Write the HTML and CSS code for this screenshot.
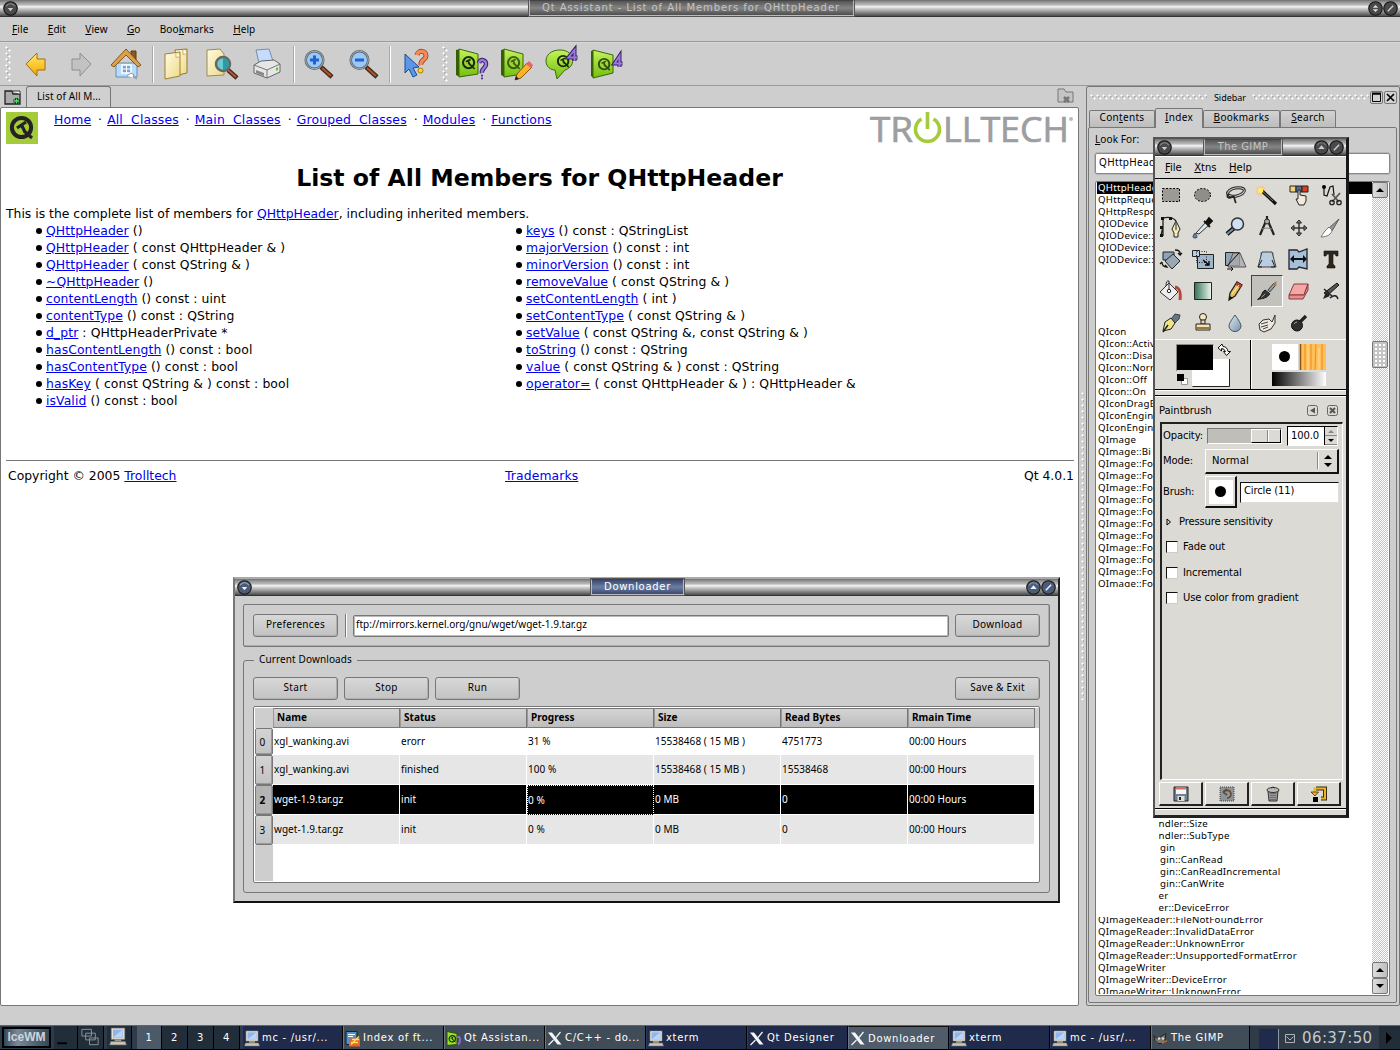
FILE: index.html
```html
<!DOCTYPE html>
<html lang="en">
<head>
<meta charset="utf-8">
<title>Qt Assistant</title>
<link rel="stylesheet" href="styles.css">
</head>
<body>
<svg width="0" height="0" class="defs">
  <defs>
    <linearGradient id="gold" x1="0" y1="0" x2="0" y2="1"><stop offset="0" stop-color="#ffe96a"/><stop offset="1" stop-color="#f7a800"/></linearGradient>
    <linearGradient id="paper" x1="0" y1="0" x2="1" y2="1"><stop offset="0" stop-color="#fffbe0"/><stop offset="1" stop-color="#eed98a"/></linearGradient>
    <linearGradient id="lime" x1="0" y1="0" x2="0" y2="1"><stop offset="0" stop-color="#c4f25a"/><stop offset="1" stop-color="#72bf10"/></linearGradient>
    <linearGradient id="steel" x1="0" y1="0" x2="1" y2="1"><stop offset="0" stop-color="#e4edf5"/><stop offset="1" stop-color="#7890a8"/></linearGradient>
    <linearGradient id="green" x1="0" y1="0" x2="1" y2="0"><stop offset="0" stop-color="#2f7553"/><stop offset="1" stop-color="#f2f7f2"/></linearGradient>
    <symbol id="roll" viewBox="0 0 14 14"><circle cx="7" cy="7" r="6.3" fill="#4a4a4a" stroke="#111"/><path d="M3 5a4.5 4.5 0 0 1 8 0" stroke="#8a8a8a" fill="none"/><path d="M4.500 6.500h5l-2.500 3z" fill="#ccc"/></symbol>
    <symbol id="max" viewBox="0 0 14 14"><circle cx="7" cy="7" r="6.300" fill="#4a4a4a" stroke="#111"/><path d="M3 5a4.500 4.500 0 0 1 8 0" stroke="#777" fill="none"/><path d="M4 8.500h6l-3-3.700z" fill="#ccc"/></symbol>
    <symbol id="restore" viewBox="0 0 14 14"><circle cx="7" cy="7" r="6.300" fill="#4a4a4a" stroke="#111"/><path d="M4.500 6.300h5l-2.500-2.600zM4.500 7.700h5l-2.500 2.600z" fill="#ddd"/></symbol>
    <symbol id="close" viewBox="0 0 14 14"><circle cx="7" cy="7" r="6.300" fill="#4a4a4a" stroke="#111"/><path d="M4.500 9.500l5-5" stroke="#ccc" stroke-width="1.400"/></symbol>
    <symbol id="q" viewBox="0 0 20 20"><circle cx="9.500" cy="9.500" r="7" fill="none" stroke="#1d2a08" stroke-width="2.600"/><path d="M6 8.500l6-3M9 7l2 5.500M9 9.500l8 8" stroke="#1d2a08" stroke-width="2.200"/></symbol>
    <symbol id="term" viewBox="0 0 16 17"><path d="M2 1h12v10H2z" fill="#e5e2d8" stroke="#8c8a80" stroke-width=".6"/><path d="M3.500 2.300h9v7.200h-9z" fill="#8fb5ee"/><path d="M4 9l8-6.500v6.500z" fill="#bcd4fa"/><path d="M5 11h6v2H5z" fill="#9a968a"/><path d="M1.500 13h13l1 3H.5z" fill="#c9c5b8" stroke="#77746a" stroke-width=".6"/></symbol>
    <symbol id="x11" viewBox="0 0 16 14"><path d="M1 1h4l9.500 12h-4z" fill="#f4f6f8"/><path d="M13.500 .5L9 6M6.500 8.500l-5 5" stroke="#f4f6f8" stroke-width="1.200"/></symbol>
  </defs>
</svg>

<div class="desktop">
  <main class="assistant">
    <header class="titlebar main-title">
      <svg class="wb"><use href="#roll"/></svg>
      <span class="fill"></span>
      <span class="caption cap-main"><span class="t-main">Qt Assistant - List of All Members for QHttpHeader</span></span>
      <span class="fill"></span>
      <svg class="wb"><use href="#restore"/></svg><svg class="wb"><use href="#close"/></svg>
    </header>
    <nav class="menubar"><span><u>F</u>ile</span><span><u>E</u>dit</span><span><u>V</u>iew</span><span><u>G</u>o</span><span>Boo<u>k</u>marks</span><span><u>H</u>elp</span></nav>
    <div class="toolbar">
      <i class="grip"></i>
      <svg class="tb" viewBox="0 0 32 32"><path d="M6 16L17 5v6h8v11h-8v6z" fill="url(#gold)" stroke="#a86a08"/></svg>
      <svg class="tb" viewBox="0 0 32 32"><path d="M26 16L15 5v6H7v11h8v6z" fill="#c2c2c2" stroke="#8e8e8e"/></svg>
      <svg class="tb" viewBox="0 0 32 32"><path d="M21 3h5v9h-5z" fill="#8a5a1c" stroke="#5c3a0c"/><path d="M6 15h21v14H6z" fill="#b5dcff" stroke="#6f8ca5"/><path d="M1 17L16 1l15 16-3 2L16 7 4 19z" fill="#dca04c" stroke="#8a5618"/><path d="M12 17h9v8h-9z" fill="#79a5cf" stroke="#fff" stroke-width="1.500"/><path d="M16.500 17v8M12 21h9" stroke="#fff"/><path d="M17 28l4-3 3 2-1 2 4 2" fill="#fff" stroke="#777" stroke-width=".8"/></svg>
      <i class="sep s1"></i>
      <svg class="tb" viewBox="0 0 32 32"><path d="M14 2l12-1v24l-9 2z" fill="url(#paper)" stroke="#927929"/><path d="M4 6l15-2v24L4 31z" fill="url(#paper)" stroke="#a0802a"/><path d="M15 4.500v5l4-1M22 1.500v5l4-1" fill="#fff" stroke="#b89a46" stroke-width=".7"/></svg>
      <svg class="tb" viewBox="0 0 32 32"><path d="M1 2l13-1 4 5v21L1 28z" fill="url(#paper)" stroke="#a08a48"/><path d="M22 22l9 8" stroke="#43281c" stroke-width="4.500"/><path d="M22 22l8 7" stroke="#b5583a" stroke-width="2"/><circle cx="17" cy="16" r="7" fill="#6ccbd0" stroke="#666" stroke-width="2.500"/><path d="M17 10v12a6 6 0 0 0 0-12z" fill="#2f9aa2"/></svg>
      <svg class="tb" viewBox="0 0 32 32"><path d="M5 2l13-1 4 12-14 2z" fill="#c4dcff" stroke="#7a8ca8"/><path d="M3 17l7-4 13-1 6 4v8l-13 6-13-5z" fill="#e6e6e6" stroke="#666"/><path d="M3 17l13 5 13-6M16 22v8" fill="none" stroke="#777"/><path d="M5 22l8 3v3l-8-3z" fill="#888"/><path d="M25 20l2-1v3l-2 1z" fill="#5fc13a"/></svg>
      <i class="sep s2"></i>
      <svg class="tb" viewBox="0 0 32 32"><path d="M19 19l11 10" stroke="#43281c" stroke-width="4.500"/><path d="M20 20l9 8" stroke="#b0542c" stroke-width="2"/><circle cx="12.500" cy="12" r="8.800" fill="#9cc8f4" stroke="#59636c" stroke-width="2.500"/><circle cx="12.500" cy="12" r="8.800" fill="none" stroke="#a5afb8" stroke-width="1"/><path d="M12.500 7.500v9M8 12h9" stroke="#1e62d4" stroke-width="3"/></svg>
      <svg class="tb" viewBox="0 0 32 32"><path d="M19 19l11 10" stroke="#43281c" stroke-width="4.500"/><path d="M20 20l9 8" stroke="#b0542c" stroke-width="2"/><circle cx="12.500" cy="12" r="8.800" fill="#9cc8f4" stroke="#59636c" stroke-width="2.500"/><circle cx="12.500" cy="12" r="8.800" fill="none" stroke="#a5afb8" stroke-width="1"/><path d="M8 12h9" stroke="#1e62d4" stroke-width="3"/></svg>
      <i class="sep s3"></i>
      <svg class="tb" viewBox="0 0 32 32"><path d="M6 6v19l4-4 4 8 4-2-4-7 6-1z" fill="#5b97e8" stroke="#1e4a92"/><path d="M18 7c1-5 9-5 9 1 0 4-6 4-5 9" fill="none" stroke="#a8432a" stroke-width="5"/><path d="M18 7c1-5 9-5 9 1 0 4-6 4-5 9" fill="none" stroke="#f58a58" stroke-width="3.200"/><circle cx="21.500" cy="22.500" r="2.500" fill="#fbd633" stroke="#a57a10"/></svg>
      <i class="grip g2"></i>
      <svg class="tb" viewBox="0 0 32 32"><path d="M1 2l4-1v28l-4-2z" fill="#375f08"/><path d="M4 1l19 5v20L4 29z" fill="url(#lime)" stroke="#3a6508"/><use href="#q" x="6" y="7" width="16" height="16"/><path d="M24 15c1-5 7-3 7 1 0 5-5 4-4 9M26 29h2" fill="none" stroke="#332064" stroke-width="4.500"/><path d="M24 15c1-5 7-3 7 1 0 5-5 4-4 9M26 29h2" fill="none" stroke="#9b78dc" stroke-width="2.500"/></svg>
      <svg class="tb" viewBox="0 0 32 32"><path d="M1 2l4-1v28l-4-2z" fill="#375f08"/><path d="M4 1l19 5v20L4 29z" fill="url(#lime)" stroke="#3a6508"/><g opacity=".7"><use href="#q" x="6" y="7" width="16" height="16"/></g><path d="M15 32l2-6 10-11 5 4-11 11z" fill="#fbb42a" stroke="#8a540a"/><path d="M26 16l3-3 4 4-2 3z" fill="#e9646c"/><path d="M15 32l1-4 3 3z" fill="#222"/></svg>
      <svg class="tb" viewBox="0 0 32 32"><path d="M15 2C6 2 1 7 1 13c0 6 5 9 9 9l2 9 8-9c6-2 9-7 7-12C26 4 20 2 15 2z" fill="url(#lime)" stroke="#3f6a10"/><use href="#q" x="11" y="6" width="15" height="15"/><path d="M29.500 13V2l-6 7.500h9" fill="none" stroke="#332064" stroke-width="4"/><path d="M29.500 13V2l-6 7.500h9" fill="none" stroke="#9b78dc" stroke-width="2"/></svg>
      <svg class="tb" viewBox="0 0 32 32"><path d="M1 3l3-1v28l-3-2z" fill="#375f08"/><path d="M3 2l20 5v18L3 30z" fill="url(#lime)" stroke="#3a6508"/><g opacity=".8"><use href="#q" x="7" y="9" width="15" height="15"/></g><path d="M29.500 19V8l-5 7.500h8" fill="none" stroke="#332064" stroke-width="4"/><path d="M29.500 19V8l-5 7.500h8" fill="none" stroke="#9b78dc" stroke-width="2"/></svg>
    </div>
    <div class="work">
      <section class="browser">
        <div class="tabrow">
          <svg class="newtab" viewBox="0 0 17 15"><path d="M1 14V1h7l1 3h7v10z" fill="#aaa" stroke="#222" stroke-width="1.300"/><path d="M9 1h7v3" fill="#fff" stroke="#333"/><path d="M12.500 8v6M9.500 11h6" stroke="#052c0a" stroke-width="3"/><path d="M12.500 8.500v5M10 11h5" stroke="#51e26a" stroke-width="1.400"/></svg>
          <span class="tab-doc">List of All M...</span>
          <span class="fill"></span>
          <svg class="closetab" viewBox="0 0 17 16"><path d="M1 14V1h6l2 3h7v10z" fill="#c4c4c4" stroke="#777"/><path d="M7 9l5 5M12 9l-5 5" stroke="#777" stroke-width="2.600"/></svg>
        </div>
        <article class="page">
          <div class="pagehead">
            <svg class="qtlogo" viewBox="0 0 32 32"><path d="M0 0h32v32H0z" fill="#a4cb39"/><circle cx="15.500" cy="15.500" r="9.600" fill="none" stroke="#262223" stroke-width="4"/><path d="M11 16l9-6M15 12l4 8M18 19l8 7" stroke="#262223" stroke-width="3.200"/></svg>
            <div class="links"><a>Home</a><b>·</b><a>All&nbsp; Classes</a><b>·</b><a>Main&nbsp; Classes</a><b>·</b><a>Grouped&nbsp; Classes</a><b>·</b><a>Modules</a><b>·</b><a>Functions</a></div>
            <svg class="troll" viewBox="0 0 204 34"><g fill="#9c9ea1" stroke="#9c9ea1" stroke-width=".7" font-family="Open Sans" font-size="35"><text x="0" y="31" textLength="43" lengthAdjust="spacingAndGlyphs">TR</text><text x="73" y="31" textLength="126" lengthAdjust="spacingAndGlyphs">LLTECH</text></g><path d="M51.500 8a12 12 0 1 0 12 0" fill="none" stroke="#a4cb39" stroke-width="3.600"/><path d="M57.500 1v17" stroke="#a4cb39" stroke-width="3.600"/><circle cx="201" cy="8" r="2" fill="#bbb"/></svg>
          </div>
          <h1>List of All Members for QHttpHeader</h1>
          <p class="lead">This is the complete list of members for <a>QHttpHeader</a>, including inherited members.</p>
          <div class="cols">
            <ul>
              <li><a>QHttpHeader</a> ()</li><li><a>QHttpHeader</a> ( const QHttpHeader &amp; )</li><li><a>QHttpHeader</a> ( const QString &amp; )</li><li><a>~QHttpHeader</a> ()</li><li><a>contentLength</a> () const : uint</li><li><a>contentType</a> () const : QString</li><li><a>d_ptr</a> : QHttpHeaderPrivate *</li><li><a>hasContentLength</a> () const : bool</li><li><a>hasContentType</a> () const : bool</li><li><a>hasKey</a> ( const QString &amp; ) const : bool</li><li><a>isValid</a> () const : bool</li>
            </ul>
            <ul>
              <li><a>keys</a> () const : QStringList</li><li><a>majorVersion</a> () const : int</li><li><a>minorVersion</a> () const : int</li><li><a>removeValue</a> ( const QString &amp; )</li><li><a>setContentLength</a> ( int )</li><li><a>setContentType</a> ( const QString &amp; )</li><li><a>setValue</a> ( const QString &amp;, const QString &amp; )</li><li><a>toString</a> () const : QString</li><li><a>value</a> ( const QString &amp; ) const : QString</li><li><a>operator=</a> ( const QHttpHeader &amp; ) : QHttpHeader &amp;</li>
            </ul>
          </div>
          <footer class="pagefoot"><span>Copyright © 2005 <a>Trolltech</a></span><a>Trademarks</a><span class="ver">Qt 4.0.1</span></footer>
        </article>
      </section>
      <div class="splitter"><i></i></div>
      <aside class="sidebar">
        <div class="dock"><i class="dots"></i><span>Sidebar</span><i class="dots"></i>
          <svg viewBox="0 0 13 13"><rect x=".5" y=".5" width="12" height="12" rx="1.500" fill="#d2d2d2" stroke="#777"/><path d="M2.500 3h8v7.500h-8z" fill="none" stroke="#000"/><path d="M2 2.500h9" stroke="#000" stroke-width="2"/></svg>
          <svg viewBox="0 0 13 13"><rect x=".5" y=".5" width="12" height="12" rx="1.500" fill="#d2d2d2" stroke="#777"/><path d="M3 3l7 7M10 3l-7 7" stroke="#000" stroke-width="1.700"/></svg>
        </div>
        <div class="sidetabs"><span class="w1">Con<u>t</u>ents</span><span class="w2 on"><u>I</u>ndex</span><span class="w3"><u>B</u>ookmarks</span><span class="w4"><u>S</u>earch</span></div>
        <div class="pane">
          <label><u>L</u>ook For:</label>
          <div class="lookup">QHttpHead</div>
          <div class="listbox">
            <div class="rows">
              <div class="sel">QHttpHeade</div><div>QHttpReque</div><div>QHttpRespo</div><div>QIODevice</div><div>QIODevice::</div><div>QIODevice::</div><div>QIODevice::</div>
              <div class="gap5"></div>
              <div>QIcon</div><div>QIcon::Activ</div><div>QIcon::Disa</div><div>QIcon::Norr</div><div>QIcon::Off</div><div>QIcon::On</div><div>QIconDragE</div><div>QIconEngin</div><div>QIconEngin</div><div>QImage</div><div>QImage::Bi</div><div>QImage::Fo</div><div>QImage::Fo</div><div>QImage::Fo</div><div>QImage::Fo</div><div>QImage::Fo</div><div>QImage::Fo</div><div>QImage::Fo</div><div>QImage::Fo</div><div>QImage::Fo</div><div>QImage::Fo</div><div class="cutb">QImage::Fo</div>
              <div class="gap19"></div>
              <div class="in1">ndler::Size</div><div class="in1">ndler::SubType</div><div class="in2">gin</div><div class="in2">gin::CanRead</div><div class="in2">gin::CanReadIncremental</div><div class="in2">gin::CanWrite</div><div class="in1">er</div><div class="in1">er::DeviceError</div><div class="cutt">QImageReader::FileNotFoundError</div><div>QImageReader::InvalidDataError</div><div>QImageReader::UnknownError</div><div>QImageReader::UnsupportedFormatError</div><div>QImageWriter</div><div>QImageWriter::DeviceError</div><div>QImageWriter::UnknownError</div>
            </div>
            <div class="scroll"><b class="up"></b><i class="tr1"></i><b class="thumb"></b><i class="tr2"></i><b class="up"></b><b class="down"></b></div>
          </div>
        </div>
      </aside>
    </div>
  </main>

  <section class="downloader">
    <header class="titlebar">
      <svg class="wb"><use href="#roll"/></svg><span class="fill"></span><span class="caption cap-dl">Downloader</span><span class="fill"></span><svg class="wb"><use href="#max"/></svg><svg class="wb"><use href="#close"/></svg>
    </header>
    <div class="dlbody">
      <div class="urlbox"><span class="btn">Preferences</span><i class="vbar"></i><span class="url">ftp://mirrors.kernel.org/gnu/wget/wget-1.9.tar.gz</span><span class="btn">Download</span></div>
      <div class="group"><span class="legend">Current Downloads</span>
        <div class="btnrow"><span class="btn">Start</span><span class="btn">Stop</span><span class="btn">Run</span><span class="fill"></span><span class="btn">Save &amp; Exit</span></div>
        <div class="table">
          <div class="tr th"><i></i><span>Name</span><span>Status</span><span>Progress</span><span>Size</span><span>Read Bytes</span><span>Rmain Time</span></div>
          <div class="tr r0"><b>0</b><span>xgl_wanking.avi</span><span>erorr</span><span>31 %</span><span>15538468 ( 15 MB )</span><span>4751773</span><span>00:00 Hours</span></div>
          <div class="tr alt"><b>1</b><span>xgl_wanking.avi</span><span>finished</span><span>100 %</span><span>15538468 ( 15 MB )</span><span>15538468</span><span>00:00 Hours</span></div>
          <div class="tr hot"><b>2</b><span>wget-1.9.tar.gz</span><span>init</span><span class="focus">0 %</span><span>0 MB</span><span>0</span><span>00:00 Hours</span></div>
          <div class="tr alt"><b>3</b><span>wget-1.9.tar.gz</span><span>init</span><span>0 %</span><span>0 MB</span><span>0</span><span>00:00 Hours</span></div>
          <div class="tail"></div>
        </div>
      </div>
    </div>
  </section>

  <section class="gimp">
    <header class="titlebar">
      <svg class="wb"><use href="#roll"/></svg><span class="fill"></span><span class="caption cap-gimp">The GIMP</span><span class="fill"></span><svg class="wb"><use href="#max"/></svg><svg class="wb"><use href="#close"/></svg>
    </header>
    <nav class="gmenu"><span><u>F</u>ile</span><span><u>X</u>tns</span><span><u>H</u>elp</span></nav>
    <div class="tools">
      <svg viewBox="0 0 32 32"><rect x="7.500" y="9.500" width="17" height="13" fill="#9b9a94" stroke="#000" stroke-dasharray="2 1.500"/></svg>
      <svg viewBox="0 0 32 32"><ellipse cx="15.500" cy="16" rx="8" ry="6.500" fill="#8f8e88" stroke="#000" stroke-dasharray="2 1.500"/></svg>
      <svg viewBox="0 0 32 32"><ellipse cx="17" cy="13" rx="8.500" ry="4" transform="rotate(-12 17 13)" fill="none" stroke="#222" stroke-width="3"/><ellipse cx="17" cy="13" rx="8.500" ry="4" transform="rotate(-12 17 13)" fill="none" stroke="#ccc"/><path d="M10 15c-4 3 0 5 3 3s2 3 4 6" fill="none" stroke="#222" stroke-width="1.700"/></svg>
      <svg viewBox="0 0 32 32"><circle cx="10" cy="12" r="5" fill="#f9c0a0" opacity=".7"/><path d="M10 11l15 14" stroke="#111" stroke-width="3.200"/><path d="M10 11l12 11" stroke="#777"/><circle cx="9.500" cy="11.500" r="2.800" fill="#ffee58"/></svg>
      <svg viewBox="0 0 32 32"><path d="M7 7h6v6H7z" fill="#f3d37a" stroke="#222"/><path d="M13 7h6v6h-6z" fill="#4c6f96" stroke="#222"/><path d="M19 7h6v6h-6z" fill="#df3b1c" stroke="#222"/><path d="M15 11h2v5l6 1v5l-2 4h-5l-3-6h2z" fill="#f3eadc" stroke="#222"/></svg>
      <svg viewBox="0 0 32 32"><circle cx="9" cy="8" r="2" fill="#000"/><path d="M9 8v8l3 1 3-9 3-1 1 9" fill="none" stroke="#111" stroke-width="1.200"/><path d="M17 15l7 8M25 14l-8 9" stroke="#555" stroke-width="1.700"/><circle cx="17" cy="23.500" r="2.200" fill="none" stroke="#222" stroke-width="1.300"/><circle cx="24" cy="23.500" r="2.200" fill="none" stroke="#222" stroke-width="1.300"/></svg>

      <svg viewBox="0 0 32 32"><path d="M8 25V7q9-2 13 3M8 14l-2 11" fill="none" stroke="#222" stroke-width="1.300"/><path d="M6 6h3v3H6zM5 15h3v3H5zM5 23h3v3H5zM14 6h3v3h-3z" fill="#111"/><path d="M17 18l4-8 4 8-2 4v4h-4v-4z" fill="#f4e9b8" stroke="#222"/><path d="M21 12v7" stroke="#222"/></svg>
      <svg viewBox="0 0 32 32"><path d="M9 22l10-11 3 3-10 9z" fill="#dbe7f3" stroke="#333"/><path d="M17 10l6 6M19 11l3-4 3 3-3 3z" fill="#111" stroke="#111" stroke-width="1.800"/><path d="M8 22q-4 5 0 5t0-5" fill="#5d88b5" stroke="#345"/></svg>
      <svg viewBox="0 0 32 32"><path d="M8 23l7-6" stroke="#111" stroke-width="4.500"/><path d="M8 23l6-5" stroke="#7890a5" stroke-width="2"/><circle cx="18.500" cy="13" r="6" fill="#cfe0f4" stroke="#333" stroke-width="1.500"/></svg>
      <svg viewBox="0 0 32 32"><path d="M16 5v4M15 10L9 24M17 10l6 14" stroke="#222" stroke-width="2.200"/><circle cx="16" cy="10.500" r="2.500" fill="#aaa" stroke="#222"/><path d="M11 18q5-2 10 0" stroke="#888" fill="none"/></svg>
      <svg viewBox="0 0 32 32"><path d="M16 10v14M9 17h14" stroke="#333" stroke-width="1.500"/><path d="M16 9l-2.500 3h5zM16 25l-2.500-3h5zM8 17l3-2.500v5zM24 17l-3-2.500v5z" fill="#888" stroke="#222"/></svg>
      <svg viewBox="0 0 32 32"><path d="M24 8L14 17l3 3z" fill="#999" stroke="#333" stroke-width=".7"/><path d="M14 16c-4 3-6 7-8 10 6 0 11-3 11-7z" fill="#fff" stroke="#777"/></svg>

      <svg viewBox="0 0 32 32"><path d="M8 9h11v8H8z" fill="#8ba5bd" stroke="#222"/><path d="M10 18l8-7 7 7-8 8z" fill="#9aa7b5" stroke="#222"/><path d="M20 7q6 0 5 5l-2-2m2 2l2-2M7 19q0 5 5 5l-2-2m-3-3l-2 2" fill="none" stroke="#111" stroke-width="1.300"/></svg>
      <svg viewBox="0 0 32 32"><path d="M10.500 11.500h16v14h-16z" fill="#9eb5ca" stroke="#222"/><path d="M5.500 7.500h7v6h-7z" fill="#b9cfe6" stroke="#222"/><path d="M9.500 8.500h10v11h-10z" fill="none" stroke="#222" stroke-dasharray="1 1.500"/><path d="M16 17l6 5m0-4v4h-4" stroke="#000" fill="none" stroke-width="1.300"/></svg>
      <svg viewBox="0 0 32 32"><path d="M6.500 9.500h14v13h-14z" fill="#8fa4b8" stroke="#222"/><path d="M14 10h7l6 14H9z" fill="#aaa" fill-opacity=".8" stroke="#555"/><path d="M20 10L8 23M8 26h6m-2-2l2 2-2 2" stroke="#111" fill="none"/></svg>
      <svg viewBox="0 0 32 32"><path d="M9 9h14v14H9z" fill="#a8b8c6"/><path d="M11 9h10l4 15H7z" fill="#b9cce0" stroke="#444"/><path d="M11 17l-4 7h4M21 17l3 7h-4" fill="none" stroke="#222"/></svg>
      <svg viewBox="0 0 32 32"><path d="M6 7h8l2 2 8-3v20l-8-2-2 2H6z" fill="#a6c0d8" stroke="#223" stroke-width="1.300"/><path d="M7 16l4-4v3h9v-3l4 4-4 4v-3h-9v3z" fill="#111"/></svg>
      <svg viewBox="0 0 32 32"><path d="M9 8h14v5h-2l-1-2h-2v10l2 2v2h-8v-2l2-2V11h-2l-1 2H9z" fill="#2f271b" stroke="#111" stroke-width=".6"/></svg>

      <svg viewBox="0 0 32 32"><path d="M20 12c5 1 6 5 5 13" stroke="#b64836" stroke-width="3" fill="none"/><path d="M5 17l9-9 9 9-8 8z" fill="#eee" stroke="#333"/><path d="M14 15V6q-3-1-3 5" fill="none" stroke="#333"/><circle cx="14" cy="16" r="1.700" fill="#fff" stroke="#222"/></svg>
      <svg viewBox="0 0 32 32"><path d="M7.500 7.500h17v17h-17z" fill="url(#green)" stroke="#222"/></svg>
      <svg viewBox="0 0 32 32"><path d="M11 18l7-11 5 3-7 11-6 4z" fill="#e7bd5d" stroke="#222" stroke-width="1.300"/><path d="M18 7l5 3-2 3-4-3z" fill="#b83d32"/><path d="M13 19l7-9" stroke="#fff0b0"/><path d="M10 25l1-4 3 2z" fill="#111"/></svg>
      <svg class="picked" viewBox="0 0 32 32"><path d="M17 15l6-7 2 2-6 7z" fill="#8ea0af" stroke="#333"/><path d="M23 8l3-3v5l-2 1z" fill="#a8774c"/><path d="M14 15l5 4c-3 5-8 5-13 6 5-3 4-8 8-10z" fill="#333" stroke="#111"/><path d="M14 19l-4 4" stroke="#aaa"/></svg>
      <svg viewBox="0 0 32 32"><path d="M11 9h14l-4 11H6z" fill="#f5a6a6" stroke="#8b3a3a"/><path d="M6 20h15l4-11v6l-5 9H6z" fill="#e58f90" stroke="#8b3a3a"/></svg>
      <svg viewBox="0 0 32 32"><path d="M9 18L22 8l2 2-11 10z" fill="#555" stroke="#111"/><path d="M8 24l3-7 4 4z" fill="#222"/><path d="M9 14l8 7M15 23q6-5 8 1" fill="none" stroke="#222" stroke-width="1.500"/></svg>

      <svg viewBox="0 0 32 32"><path d="M16 12l4-5 5 1-1 4-4 4z" fill="#657588" stroke="#444"/><path d="M8 24l2-9 6-4 4 5-4 6z" fill="#efe48a" stroke="#222"/><path d="M8 25l5-7" stroke="#222" stroke-width="1.500"/></svg>
      <svg viewBox="0 0 32 32"><circle cx="16" cy="10" r="3.500" fill="#f3e6c4" stroke="#222"/><path d="M14 13h4v4h-4z" fill="#ead9ae" stroke="#222"/><path d="M9 17h14v6H9z" fill="#f3e3b4" stroke="#222"/><path d="M9 21h14" stroke="#8f7a44" stroke-width="2"/></svg>
      <svg viewBox="0 0 32 32"><path d="M16 8q6 8 6 11a6 5.500 0 0 1-12 0q0-3 6-11z" fill="url(#steel)" stroke="#45576a"/></svg>
      <svg viewBox="0 0 32 32"><path d="M8 17l4-4 6-1 3 3 3-7v8l-4 6-7 3-4-2z" fill="#eee8de" stroke="#333"/><path d="M10 17l7-2M10 20l7-2M12 22l5-2" stroke="#444"/></svg>
      <svg viewBox="0 0 32 32"><circle cx="14" cy="18.500" r="5.500" fill="#2f2f2f" stroke="#111"/><path d="M17 15l6-6" stroke="#222" stroke-width="3.200"/><path d="M11 17q1-2 3-2" stroke="#aaa" fill="none"/></svg>
    </div>
    <div class="colors">
      <div class="fgbg"><svg viewBox="0 0 94 49"><path d="M37 19h38v27H37z" fill="#fff"/><path d="M37.500 46.500h37V19" fill="none" stroke="#222"/><path d="M22 4h36v26H22z" fill="#000"/><path d="M21.500 31V4.500h37" fill="none" stroke="#8b8a84"/><path d="M26.500 38.500h6v6h-6z" fill="#fff" stroke="#999"/><path d="M22 34h7v7h-7z" fill="#000"/><path d="M63 8l4-4 1 2.500q4 0 5 5l2.500 0-4 4-3-4h2q-1-3-4-3v2.500z" fill="#fff" stroke="#111"/></svg></div>
      <div class="bpg"><svg viewBox="0 0 92 49"><path d="M20 4h26v26H20z" fill="#fff"/><circle cx="32.500" cy="16.500" r="5.500"/><path d="M48 4h26v26H48z" fill="#ffbf59"/><path d="M48.500 4v26" stroke="#8a5416" stroke-width="1.500"/><path d="M53 4v26M59 4v26M64 4l-1 26M70 4v26" stroke="#f08f2c" stroke-width="1.100"/><path d="M56 4v26M67 8v22" stroke="#ffe08c"/><defs><linearGradient id="bw"><stop offset="0"/><stop offset="1" stop-color="#fff"/></linearGradient></defs><path d="M20 32h54v14H20z" fill="url(#bw)"/></svg></div>
    </div>
    <div class="sash"></div>
    <div class="opts">
      <div class="opthead"><span>Paintbrush</span><span class="fill"></span>
        <svg viewBox="0 0 11 11"><rect x=".5" y=".5" width="10" height="10" rx="2" fill="none" stroke="#666"/><path d="M8 2.500v6L3 5.500z" fill="#555"/></svg>
        <svg viewBox="0 0 11 11"><rect x=".5" y=".5" width="10" height="10" rx="2" fill="none" stroke="#666"/><path d="M3 3l5 5M8 3l-5 5" stroke="#555" stroke-width="2"/></svg></div>
      <div class="frame">
        <div class="row o1"><label>Opacity:</label><span class="scale"><i></i></span><span class="spin">100.0<i><b class="gu"></b><b class="gd"></b></i></span></div>
        <div class="row o2"><label>Mode:</label><span class="combo">Normal<i></i><svg viewBox="0 0 8 14"><path d="M0 5h8L4 1zM0 9h8l-4 4z"/></svg></span></div>
        <div class="row o3"><label>Brush:</label><span class="brush"><svg viewBox="0 0 24 24"><path d="M0 0h24v24H0z" fill="#fff"/><circle cx="11.500" cy="11.500" r="5.500"/></svg></span><span class="entry">Circle (11)</span></div>
        <div class="row o4"><svg viewBox="0 0 6 8"><path d="M1 1l3.500 3L1 7z" fill="none" stroke="#000"/></svg>Pressure sensitivity</div>
        <div class="row chk c1"><i></i>Fade out</div>
        <div class="row chk c2"><i></i>Incremental</div>
        <div class="row chk c3"><i></i>Use color from gradient</div>
      </div>
      <div class="gbtns">
        <span><svg viewBox="0 0 16 16"><path d="M1 1h14v14H1z" fill="#6f8394" stroke="#222"/><path d="M3 1h10v7H3z" fill="#f5f5f5"/><path d="M3 1h10v2.500H3z" fill="#dc6a66"/><path d="M4.500 10h7v5h-7z" fill="#ddd"/><path d="M6 11h2v3H6z" fill="#222"/></svg></span>
        <span><svg viewBox="0 0 16 16"><path d="M1 1h14v14H1z" fill="#8d949a" stroke="#444" stroke-dasharray="1 1"/><path d="M4 6q7-4 8 2 0 4-4 4M4 6l4-3M4 6l4 3" stroke="#5f4d30" fill="none" stroke-width="1.600"/></svg></span>
        <span><svg viewBox="0 0 16 16"><path d="M3 5h10l-1 10H4z" fill="#999" stroke="#333"/><ellipse cx="8" cy="4" rx="6" ry="2.500" fill="#bbb" stroke="#333"/><path d="M6 7v7M8 7v7M10 7v7" stroke="#444" stroke-dasharray="1 1"/><path d="M6 2q2-2 4 0" stroke="#333" fill="none"/></svg></span>
        <span><svg viewBox="0 0 16 16"><path d="M5 2.500h9v10h-4" fill="none" stroke="#3c2a08" stroke-width="4"/><path d="M3.500 8V2.500H14v10h-4" fill="none" stroke="#eab530" stroke-width="2"/><path d="M0 6h7.500L4 10z" fill="#eab530" stroke="#3c2a08" stroke-width=".8"/><path d="M2 11h5v5H2z"/></svg></span>
      </div>
    </div>
  </section>

  <footer class="taskbar">
    <span class="ice"><b>IceWM</b></span>
    <span class="sq"><svg viewBox="0 0 24 24"><path d="M3 17h10v2H3z" fill="#000"/></svg></span>
    <span class="sq sq2"><svg viewBox="0 0 24 24"><path d="M3.500 3.500h10v7h-10zM7.500 7.500h10v7h-10zM11.500 12.500h9v7h-9z" fill="#222d3a" stroke="#8b949c"/></svg></span>
    <span class="sq sq3"><svg viewBox="0 0 16 17"><use href="#term"/></svg></span>
    <span class="ws on">1</span><span class="ws">2</span><span class="ws">3</span><span class="ws">4</span>
    <span class="task navy first"><svg><use href="#term"/></svg>mc - /usr/...</span>
    <span class="task"><svg viewBox="0 0 16 16"><path d="M1 1h11v13H1z" fill="#4c94d4" stroke="#123"/><path d="M4 8h11v8H4z" fill="#e8642a"/><path d="M3 4h7M3 6h5" stroke="#fff"/><path d="M6 14l8-8M7 9h7M6 12h7" stroke="#ffe14d" stroke-width="1.300"/></svg>Index of ft...</span>
    <span class="task"><svg viewBox="0 0 16 16"><path d="M1 1l10 2v11L1 15z" fill="#97e02c" stroke="#285008"/><use href="#q" x="2" y="4" width="9" height="9"/><path d="M11 7q3-2 3 2t-2 5" stroke="#8d67d4" stroke-width="2" fill="none"/></svg>Qt Assistan...</span>
    <span class="task"><svg><use href="#x11"/></svg>C/C++ - do...</span>
    <span class="task navy"><svg><use href="#term"/></svg>xterm</span>
    <span class="task navy"><svg><use href="#x11"/></svg>Qt Designer</span>
    <span class="task act"><svg><use href="#x11"/></svg>Downloader</span>
    <span class="task navy"><svg><use href="#term"/></svg>xterm</span>
    <span class="task navy"><svg><use href="#term"/></svg>mc - /usr/...</span>
    <span class="task last"><svg viewBox="0 0 16 16"><path d="M1 5l3 3 4-2 5-3-1 5q1 5-4 5H5Q1 11 1 5z" fill="#7a7368" stroke="#222"/><circle cx="6" cy="8" r="1.200" fill="#ddd"/><circle cx="10" cy="8" r="1.200" fill="#ddd"/><path d="M9 13l5-3" stroke="#b97a35" stroke-width="1.200"/></svg>The GIMP</span>
    <span class="graph"></span>
    <svg class="mail" viewBox="0 0 10 9"><path d="M.5.5h9v8h-9zM1.500 2.500L5 6l3.500-3.500" fill="none" stroke="#aab0b5"/></svg>
    <span class="clock">06:37:50</span>
    <span class="arrow"></span>
  </footer>
</div>
</body>
</html>
```
FILE: styles.css
```css
* { box-sizing: border-box; }
body { margin: 0; font: 10px/12px "Noto Sans", "Open Sans", sans-serif; letter-spacing: .1px; color: #000; }
.defs { position: absolute; }
.desktop { position: relative; width: 1400px; height: 1050px; overflow: hidden; background: #cecece; white-space: nowrap; }
i { font-style: normal; display: block; }
svg { flex: none; display: block; overflow: visible; }
u { text-underline-offset: 1px; text-decoration-thickness: 1px; }
.fill { flex: 1; }
.assistant { height: 1025px; display: flex; flex-direction: column; }

.titlebar { display: flex; align-items: stretch; height: 17px; padding: 0 2px; flex: none; border-bottom: 1px solid #333;
  background: linear-gradient(#707070, #9a9a9a 15%, #b8b8b8 30%, #f4f4f4 42%, #d0d0d0 52%, #888 78%, #4a4a4a); }
.wb { width: 15px; height: 15px; margin-top: 1px; }
.main-title { padding: 0 2px 0 3px; }
.caption { display: flex; align-items: center; justify-content: center; border: 1px solid #bbb; border-top-color: #444; outline: 1px solid #555; background: linear-gradient(#555, #858585 50%, #4e4e4e); color: #c4c4c4; font: 10px/12px "DejaVu Sans", sans-serif; }
.cap-main { width: 325px; margin-right: 4px; height: 16px; }
.t-main { letter-spacing: .92px; }

.menubar { height: 25px; flex: none; display: flex; align-items: center; gap: 19.300px; padding-left: 12px; border-bottom: 1px solid #9b9b9b; }
.toolbar { height: 44px; flex: none; display: flex; align-items: center; border-bottom: 1px solid #9b9b9b; border-top: 1px solid #d8d8d8; padding-left: 5px; }
.tb { width: 32px; height: 32px; margin-right: 13px; }
.grip { width: 6px; height: 36px; margin-right: 9px; }
.grip, .dots, .splitter i { background:
  radial-gradient(circle at 1.500px 1.500px, #fff .9px, transparent 1.200px) 0 0/6px 6px,
  radial-gradient(circle at 4.500px 4.500px, #fff .9px, transparent 1.200px) 0 0/6px 6px,
  radial-gradient(circle at 2.500px 2.500px, #aaa .9px, transparent 1.200px) 0 0/6px 6px; }
.sep { width: 2px; height: 37px; border-left: 1px solid #a8a8a8; border-right: 1px solid #fff; }
.s1, .s2 { margin: 0 7px 0 -3px; }
.s3 { margin: 0 8px 0 -3px; }
.g2 { margin-left: -2px; margin-right: 7px; }

.work { flex: none; height: 920px; display: flex; }
.browser { width: 1079px; display: flex; flex-direction: column; }
.tabrow { height: 21px; flex: none; display: flex; padding: 0 4px; }
.newtab { width: 17px; height: 15px; margin-top: 4px; }
.tab-doc { width: 85px; height: 21px; margin-left: 5px; border: 1px solid #777; border-bottom: 0; border-radius: 3px 3px 0 0; padding: 3px 0 0 10px; background: #d0d0d0; letter-spacing: .1px; z-index: 1; }
.closetab { width: 17px; height: 16px; margin-top: 2px; margin-right: 1px; }
.page { flex: 1; background: #fff; border: 1px solid #777; border-radius: 2px; padding: 4px 4px 0 5px; font: 12.400px/17px "DejaVu Sans", sans-serif; letter-spacing: 0; }
a { color: #0000ee; text-decoration: underline; }
.pagehead { display: flex; height: 33px; }
.qtlogo { width: 32px; height: 32px; }
.links { flex: 1; display: flex; margin: -1px 0 0 16px; letter-spacing: .14px; }
.links b { width: 16px; text-align: center; padding-left: 2px; font-weight: normal; }
.troll { width: 204px; height: 34px; margin-top: -1px; }
h1 { margin: 19px 0 0; font-size: 23.600px; line-height: 28px; height: 28px; text-align: center; padding-right: 1px; }
.lead { margin: 13px 0 0; height: 17px; }
.cols { display: flex; height: 229px; }
ul { width: 480px; margin: 0; padding: 0 0 0 40px; list-style: none; letter-spacing: .09px; }
li { display: block; height: 17px; }
li::before { content: ""; float: left; width: 6px; height: 6px; border-radius: 50%; background: #000; margin: 6px 0 0 -10px; }
.pagefoot { border-top: 1px solid #777; margin-top: 9px; padding: 6px 0 0 2px; display: flex; letter-spacing: .1px; }
.pagefoot > span { width: 497px; letter-spacing: 0; }
.pagefoot > .ver { flex: 1; text-align: right; }
.splitter { width: 7px; display: flex; justify-content: center; align-items: center; }
.splitter i { width: 3px; height: 308px; }

.sidebar { width: 314px; display: flex; flex-direction: column; border: 1px solid #777; border-radius: 2px; padding: 0 2px 2px 1px; }
.dock { height: 19px; display: flex; align-items: center; padding: 1px 0 0 2px; }
.dock span { margin: 2px 6px 0 7px; font-size: 9px; letter-spacing: 0; }
.dock svg { width: 13px; height: 13px; margin-left: 1px; }
.dots { flex: 1; height: 6px; }
.sidetabs { height: 21px; display: flex; align-items: flex-end; padding-left: 1px; flex: none; }
.sidetabs span { height: 17px; text-align: center; border: 1px solid #777; border-bottom: 0; border-radius: 2px 2px 0 0; background: linear-gradient(#d2d2d2, #bdbdbd); letter-spacing: .3px; }
.sidetabs .on { height: 20px; background: #cecece; margin-bottom: -1px; z-index: 1; padding-top: 2px; }
.w1 { width: 66px; } .w2 { width: 48px; } .w3 { width: 77px; } .w4 { width: 56px; }
.pane { flex: 1; border: 1px solid #777; border-radius: 2px; padding: 5px 6px 6px; display: flex; flex-direction: column; min-height: 0; }
.pane label { height: 12px; margin-bottom: 8px; }
.lookup { height: 21px; flex: none; background: #fff; border: 1px solid #888; outline: 1px solid #b5b5b5; border-radius: 2px; padding: 2px 3px; letter-spacing: .35px; }
.listbox { margin-top: 7px; flex: 1; min-height: 0; display: flex; background: #fff; border: 1px solid #777; border-radius: 2px; overflow: hidden; padding: 0 1px 1px; }
.rows { flex: 1; overflow: hidden; letter-spacing: .23px; font-size: 9.700px; }
.rows div { height: 12px; padding-left: 1px; line-height: 12px; }
.rows .sel { background: #000; color: #fff; }
.rows .gap5 { height: 60px; }
.rows .gap19 { height: 228px; }
.rows .in1 { padding-left: 61.500px; } .rows .in2 { padding-left: 63px; }
.rows .cutb { clip-path: inset(0 0 3px 0); }
.rows .cutt { clip-path: inset(3px 0 0 0); }
.scroll { width: 16px; display: flex; flex-direction: column; background: conic-gradient(#c4c4c4 25%, #fff 0 50%, #c4c4c4 0 75%, #fff 0) 0 0/2px 2px; }
.scroll b { flex: none; height: 16px; border: 1px solid #777; border-radius: 2px; background: linear-gradient(90deg, #ddd, #bfbfbf); display: flex; justify-content: center; align-items: center; }
.scroll .thumb { height: 27px; background: radial-gradient(circle, #fff .9px, transparent 1.100px) 1px 1px/4px 4px, #c4c4c4; }
.up::after, .down::after { content: ""; border: 4px solid transparent; border-top-width: 0; border-bottom: 4px solid #000; }
.down::after { transform: rotate(180deg); }
.tr1 { height: 143px; } .tr2 { flex: 1; }

.downloader { position: absolute; left: 233px; top: 577px; width: 827px; height: 326px; background: #cecece; border: 2px solid #aaa; border-color: #aaa #222 #111 #777; display: flex; flex-direction: column; }
.downloader .wb { filter: sepia(1) hue-rotate(180deg) saturate(1.1); }
.cap-dl { width: 93px; background: linear-gradient(#39476a, #6d7fa6 50%, #3b496e); color: #fff; margin-right: 3px; }
.cap-dl { letter-spacing: .7px; }
.dlbody { flex: 1; padding: 8px 8px 7px; display: flex; flex-direction: column; }
.urlbox { height: 43px; border: 1px solid #777; border-radius: 2px; box-shadow: inset 0 -1px #aaa, inset -1px 0 #aaa; display: flex; align-items: center; padding: 0 9px; }
.btn { width: 85px; height: 23px; flex: none; border: 1px solid #777; border-radius: 3px; box-shadow: inset -1px -1px #b0b0b0; background: linear-gradient(#d8d8d8, #c2c2c2); text-align: center; line-height: 19px; letter-spacing: .3px; }
.vbar { width: 2px; height: 23px; margin: 0 7px; border-left: 1px solid #777; border-right: 1px solid #fff; }
.url { flex: 1; height: 22px; border: 1px solid #777; border-radius: 2px; box-shadow: inset 0 0 0 1px #bbb; background: #fff; padding: 2px; margin: 0 6px 0 -1px; letter-spacing: 0; }
.group { position: relative; margin-top: 13px; height: 233px; border: 1px solid #777; border-radius: 3px; padding: 16px 9px 9px; display: flex; flex-direction: column; }
.legend { position: absolute; left: 10px; top: -8px; background: #cecece; padding: 0 5px; letter-spacing: .12px; }
.btnrow { display: flex; gap: 6px; margin-bottom: 6px; }
.table { height: 177px; border: 1px solid #777; border-radius: 2px; background: #fff; display: flex; flex-direction: column; padding: 1px 4px 1px 1px; letter-spacing: .05px; }
.tr { display: grid; grid-template-columns: 18px repeat(6, 127px); align-items: stretch; height: 30px; }
.tr b { border: 1px solid #777; box-shadow: inset -1px -1px #999; border-radius: 2px; background: linear-gradient(#d4d4d4, #c2c2c2); font-weight: normal; display: flex; align-items: center; justify-content: center; padding-right: 3px; }
.tr span { border-right: 1px solid #fff; border-bottom: 1px solid #fff; padding: 0 0 2px 1px; display: flex; align-items: center; }
.r0 span { padding-bottom: 0; }
.th { height: 20px; background: #cecece; margin-right: -4px; }
.th span, .th span + span { border: 1px solid #777; border-left-color: #999; background: linear-gradient(#d4d4d4, #bdbdbd); font-weight: bold; padding-left: 3px; letter-spacing: .03px; }
.r0 { height: 27px; }
.alt span { background: #e6e6e6; }
.hot span { background: #000; color: #fff; }
.hot b { font-weight: bold; background: #b4b4b4; }
.tr .focus { border: 1px dotted #fff; padding: 0 0 1px 0; }
.tail { flex: 1; width: 18px; background: #cecece; }

.gimp { position: absolute; left: 1153px; top: 137px; width: 196px; height: 681px; border: 2px solid #555; border-right: 3px solid #181818; border-bottom: 3px solid #222; background: #dbdad5; font: 10px/12px "DejaVu Sans", sans-serif; letter-spacing: 0; display: flex; flex-direction: column; }
.cap-gimp { width: 78px; letter-spacing: .4px; }
.gmenu { height: 23px; flex: none; border-bottom: 1px solid #000; border-top: 1px solid #fff; display: flex; align-items: center; gap: 12.500px; padding-left: 10px; }
.tools { height: 160px; flex: none; display: grid; grid-template-columns: repeat(6, 32px); grid-auto-rows: 32px; width: 192px; margin-right: -1px; }
.tools svg { width: 32px; height: 32px; }
.tools .picked { background: #c2c1bb; border: 1px solid #444; border-right-color: #fff; border-bottom-color: #fff; }
.colors { display: flex; height: 51px; flex: none; border-top: 1px solid #fff; border-bottom: 1px solid #000; }
.fgbg { width: 96px; border-right: 1px solid #000; }
.fgbg svg { width: 94px; height: 49px; }
.bpg { border-left: 1px solid #fff; flex: 1; }
.bpg svg { width: 92px; height: 49px; }
.sash { height: 6px; flex: none; border-top: 1px solid #fff; border-bottom: 1px solid #000; background: #dbdad5; }
.opts { flex: 1; padding: 1px 3px 0 4px; border-top: 1px solid #fff; display: flex; flex-direction: column; }
.opthead { height: 24px; display: flex; align-items: center; letter-spacing: -.05px; padding: 1px 5px 0 0; }
.opthead svg { width: 11px; height: 11px; margin-left: 9px; }
.frame { height: 358px; border: 1px solid #fff; border-top: 2px solid #222; border-left: 2px solid #222; padding: 1px 2px 0 1px; display: flex; flex-direction: column; margin-left: 1px; }
.row { display: flex; align-items: center; flex: none; }
.row label { width: 42px; letter-spacing: -.15px; }
.o1 { height: 22px; } .o2 { height: 28px; } .o3 { height: 34px; } .o4 { height: 25px; letter-spacing: -.15px; }
.scale { width: 75px; height: 16px; margin-left: 2px; border: 1px solid #777; border-right-color: #fff; border-bottom-color: #fff; background: #bfbeb8; display: flex; justify-content: flex-end; }
.scale i { width: 30px; height: 14px; border: 1px solid #fff; border-right-color: #000; border-bottom-color: #000; background: linear-gradient(90deg, transparent 15px, #888 15px 16px, #fff 16px 17px, transparent 17px) #dbdad5; }
.spin { width: 51px; height: 20px; margin-left: 5px; background: #fff; border: 1px solid #000; border-right-color: #fff; border-bottom-color: #fff; display: flex; align-items: center; padding-left: 3px; letter-spacing: -.1px; }
.spin i { width: 13px; height: 18px; margin-left: auto; background: #dbdad5; border-left: 1px solid #000; }
.spin b { height: 9px; display: flex; align-items: center; justify-content: center; border-bottom: 1px solid #888; }
.gu::after, .gd::after { content: ""; border: 3px solid transparent; border-top: 0; border-bottom: 3px solid #888; }
.gd::after { transform: rotate(180deg); border-bottom-color: #000; }
.combo { width: 134px; height: 25px; border: 1px solid #fff; border-right: 2px solid #111; border-bottom: 2px solid #111; display: flex; align-items: center; padding-left: 6px; letter-spacing: .1px; }
.combo i { margin-left: auto; width: 2px; height: 17px; border-left: 1px solid #888; border-right: 1px solid #fff; }
.combo svg { width: 8px; height: 14px; margin: 0 5px; }
.brush { width: 32px; height: 32px; padding: 3px; border: 1px solid #fff; border-right: 2px solid #111; border-bottom: 2px solid #111; }
.brush svg { width: 24px; height: 24px; }
.entry { width: 99px; height: 21px; margin-left: 3px; background: #fff; border: 1px solid #111; border-right-color: #ddd; border-bottom-color: #ddd; padding: 2px 3px; letter-spacing: -.15px; }
.o4 svg { width: 6px; height: 8px; margin: 0 7px 0 3px; }
.chk { letter-spacing: -.12px; }
.chk i { width: 12px; height: 12px; background: #fff; border: 1px solid #111; border-right-color: #ccc; border-bottom-color: #ccc; margin: 0 5px 0 3px; }
.c1 { height: 25px; } .c2 { height: 27px; } .c3 { height: 23px; }
.gbtns { display: flex; gap: 2px; margin-top: 2px; }
.gbtns span { width: 44px; height: 24px; border: 1px solid #fff; border-right: 2px solid #222; border-bottom: 2px solid #222; display: flex; align-items: center; justify-content: center; }
.gbtns svg { width: 16px; height: 16px; }
.gimp::after { content: ""; height: 6px; border-top: 1px solid #000; box-shadow: inset 0 1px #fff; }

.taskbar { height: 25px; display: flex; background: #303b49; border-top: 1px solid #596878; border-bottom: 1px solid #000; color: #fff; font: 10px/22px "DejaVu Sans", sans-serif; letter-spacing: .7px; }
.ice { width: 49px; height: 21px; margin: 1px 3px 0 2px; border: 2px solid #000; background: linear-gradient(90deg, #33475b, #77889a 30%, #33475b); font: bold 12px/17px "Liberation Sans", sans-serif; text-align: center; letter-spacing: 0; }
.ice b { color: #d0d4d8; }
.sq { width: 24px; background: #222d3a; border-right: 1px solid #000; }
.sq svg { width: 24px; height: 23px; }
.sq2 { width: 26px; } .sq3 { margin: 0 5px 0 3px; width: 25px; padding: 1px 2px; }
.sq3 svg { width: 18px; height: 19px; }
.ws { width: 26px; flex: none; background: #222d3a; border-right: 1px solid #000; text-align: center; padding-top: 1px; }
.ws.on { width: 25px; background: #4c5a68; }
.task { width: 101px; flex: none; border-left: 1px solid #6a7784; border-right: 1px solid #000; background: #414c59; padding: 1px 0 0 1px; display: flex; align-items: center; overflow: hidden; }
.task.first { margin-left: 2px; }
.task.last { width: 99px; }
.task svg { width: 16px; height: 17px; margin-right: 2px; }
.navy { background: #202a4a; border-left-color: #303b60; }
.act { background: #505c69; border-top: 1px solid #111; }
.graph { width: 20px; flex: none; height: 20px; margin: 3px 6px 0 9px; background: #202a4a; border-right: 1px solid #8995a0; }
.mail { width: 10px; height: 9px; margin: 8px 7px 0 0; }
.clock { width: 77px; flex: none; font: 15px/24px "DejaVu Sans", sans-serif; letter-spacing: .4px; color: #c5c9cc; }
.arrow { flex: 1; background: #222d3a; }
.arrow::after { content: ""; display: block; margin: 6px 0 0 7px; width: 0; border: 6px solid transparent; border-left: 6px solid #000; border-right: 0; }
```
